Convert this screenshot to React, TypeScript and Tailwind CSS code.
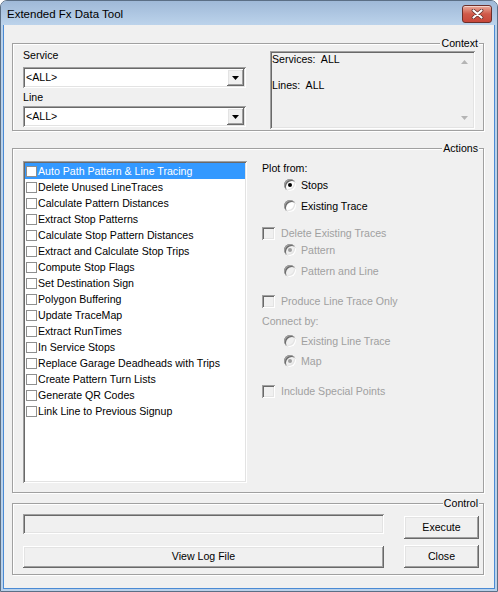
import React from "react"

const sunken =
    "shadow-[inset_1px_1px_0_#a0a0a0,inset_-1px_-1px_0_#ffffff,inset_2px_2px_0_#696969,inset_-2px_-2px_0_#e3e3e3]"
const raised =
    "shadow-[inset_-1px_-1px_0_#696969,inset_1px_1px_0_#ffffff,inset_-2px_-2px_0_#a0a0a0,inset_2px_2px_0_#e3e3e3]"

const actions = [
    "Auto Path Pattern & Line Tracing",
    "Delete Unused LineTraces",
    "Calculate Pattern Distances",
    "Extract Stop Patterns",
    "Calculate Stop Pattern Distances",
    "Extract and Calculate Stop Trips",
    "Compute Stop Flags",
    "Set Destination Sign",
    "Polygon Buffering",
    "Update TraceMap",
    "Extract RunTimes",
    "In Service Stops",
    "Replace Garage Deadheads with Trips",
    "Create Pattern Turn Lists",
    "Generate QR Codes",
    "Link Line to Previous Signup",
]

function GroupBox({ label, className, children }: { label: string; className: string; children: React.ReactNode }) {
    return (
        <div className={`relative ml-[8px] w-[472px] border border-[#a0a0a0] shadow-[inset_1px_1px_0_#fff,1px_1px_0_#fff] ${className}`}>
            {/* caption sits over the top edge */}
            <span className="absolute right-[4px] top-[-8px] h-[14px] bg-[#f0f0f0] px-[1px] leading-[14px]">{label}</span>
            {children}
        </div>
    )
}

function Combo() {
    return (
        <div className={`flex h-[21px] w-[223px] items-stretch bg-white p-[2px] ${sunken}`}>
            <span className="flex-1 pl-[1px] leading-[17px]">&lt;ALL&gt;</span>
            <div className={`flex w-[17px] items-center justify-center bg-[#f0f0f0] ${raised}`}>
                <svg width="7" height="4" viewBox="0 0 7 4">
                    <polygon points="0,0 7,0 3.5,4" fill="#000" />
                </svg>
            </div>
        </div>
    )
}

function Radio({ label, checked, disabled, className }: { label: string; checked?: boolean; disabled?: boolean; className: string }) {
    return (
        <div className={`flex h-[14px] items-center pl-[22px] ${className}`}>
            <div className={`relative h-[12px] w-[12px] rounded-full ${disabled ? "bg-[#f0f0f0]" : "bg-white"} ${sunken}`}>
                {checked && (
                    <div className={`absolute left-[4px] top-[4px] h-[4px] w-[4px] rounded-full ${disabled ? "bg-[#a0a0a0]" : "bg-black"}`} />
                )}
            </div>
            <span className={`ml-[5px] leading-[14px] ${disabled ? "text-[#a0a0a0]" : "text-black"}`}>{label}</span>
        </div>
    )
}

function DisabledCheck({ label, className }: { label: string; className: string }) {
    return (
        <div className={`flex h-[14px] items-center ${className}`}>
            <div className={`h-[13px] w-[13px] bg-[#f0f0f0] ${sunken}`} />
            <span className="ml-[6px] leading-[14px] text-[#a0a0a0]">{label}</span>
        </div>
    )
}

export default function App() {
    return (
        <div className="flex h-[592px] w-[498px] flex-col rounded-t-[7px] border border-[#5b6f86] bg-[#b9d1ea] font-['Liberation_Sans',Arial,sans-serif] text-[10.6px] text-black">
            {/* Title bar */}
            <div className="flex h-[24px] items-start justify-between rounded-t-[6px] bg-gradient-to-b from-[#9fb9d8] to-[#bcd3eb]">
                <span className="ml-[6px] mt-[6px] text-[11.5px] leading-[14px]">Extended Fx Data Tool</span>
                <div className="mr-[5px] mt-[4px] flex h-[18px] w-[30px] items-center justify-center rounded-[3px] border border-[#6b2f2a] bg-gradient-to-b from-[#e9aa9b] via-[#cf5a4a] to-[#c8473a] shadow-[inset_0_1px_0_rgba(255,255,255,0.5)]">
                    <svg width="13" height="10" viewBox="0 0 13 10">
                        <path d="M2.5 1.5 L10.5 8.5 M10.5 1.5 L2.5 8.5" stroke="#5a2a26" strokeWidth="3.6" strokeLinecap="round" />
                        <path d="M2.5 1.5 L10.5 8.5 M10.5 1.5 L2.5 8.5" stroke="#ffffff" strokeWidth="2.2" strokeLinecap="round" />
                    </svg>
                </div>
            </div>

            {/* Client area */}
            <div className="mx-[2px] mb-[2px] flex flex-1 flex-col border-x border-b border-[#4a8ad4] bg-[#f0f0f0]">
                {/* Context */}
                <GroupBox label="Context" className="mt-[18px] h-[88px]">
                    <div className="flex items-start pl-[10px] pt-[4px]">
                        <div className="flex flex-col">
                            <span className="h-[14px] leading-[14px]">Service</span>
                            <div className="mt-[5px]">
                                <Combo />
                            </div>
                            <span className="mt-[2px] h-[14px] leading-[14px]">Line</span>
                            <div className="mt-[2px]">
                                <Combo />
                            </div>
                        </div>
                        <div className={`ml-[24px] mt-[3px] flex h-[78px] w-[205px] p-[2px] ${sunken}`}>
                            <div className="flex-1 whitespace-pre leading-[13px]">
                                <div>Services:  ALL</div>
                                <div>&nbsp;</div>
                                <div>Lines:  ALL</div>
                            </div>
                            <div className="flex w-[17px] flex-col items-center justify-between py-[7px]">
                                <svg width="7" height="4" viewBox="0 0 7 4">
                                    <polygon points="0,4 7,4 3.5,0" fill="#b4b4b4" />
                                </svg>
                                <svg width="7" height="4" viewBox="0 0 7 4">
                                    <polygon points="0,0 7,0 3.5,4" fill="#b4b4b4" />
                                </svg>
                            </div>
                        </div>
                    </div>
                </GroupBox>

                {/* Actions */}
                <GroupBox label="Actions" className="mt-[17px] h-[345px]">
                    <div className="flex items-start pl-[10px] pt-[12px]">
                        <div className={`h-[322px] w-[224px] bg-white p-[2px] ${sunken}`}>
                            {actions.map((a, i) => (
                                <div
                                    key={a}
                                    className={`flex h-[16px] items-center ${i === 0 ? "bg-[#3399ff] text-white" : "text-black"}`}
                                >
                                    <div className="ml-[1px] h-[11px] w-[11px] border border-[#8e8f8f] bg-white" />
                                    <span className="ml-[1px] leading-[16px]">{a}</span>
                                </div>
                            ))}
                        </div>
                        <div className="ml-[15px] flex flex-col">
                            <span className="h-[14px] leading-[14px]">Plot from:</span>
                            <Radio label="Stops" checked className="mt-[3px]" />
                            <Radio label="Existing Trace" className="mt-[7px]" />
                            <DisabledCheck label="Delete Existing Traces" className="mt-[13px]" />
                            <Radio label="Pattern" checked disabled className="mt-[3px]" />
                            <Radio label="Pattern and Line" disabled className="mt-[7px]" />
                            <DisabledCheck label="Produce Line Trace Only" className="mt-[16px]" />
                            <span className="mt-[6px] h-[14px] leading-[14px] text-[#a0a0a0]">Connect by:</span>
                            <Radio label="Existing Line Trace" disabled className="mt-[6px]" />
                            <Radio label="Map" checked disabled className="mt-[6px]" />
                            <DisabledCheck label="Include Special Points" className="mt-[16px]" />
                        </div>
                    </div>
                </GroupBox>

                {/* Control */}
                <GroupBox label="Control" className="mt-[10px] h-[72px]">
                    <div className="flex items-start pl-[10px] pt-[10px]">
                        <div className="flex flex-col">
                            <div className={`h-[20px] w-[361px] ${sunken}`} />
                            <div className={`mt-[12px] flex h-[22px] w-[361px] items-center justify-center ${raised}`}>
                                View Log File
                            </div>
                        </div>
                        <div className="ml-[20px] flex flex-col">
                            <div className={`mt-[2px] flex h-[23px] w-[75px] items-center justify-center ${raised}`}>Execute</div>
                            <div className={`mt-[6px] flex h-[23px] w-[75px] items-center justify-center ${raised}`}>Close</div>
                        </div>
                    </div>
                </GroupBox>
            </div>
        </div>
    )
}
